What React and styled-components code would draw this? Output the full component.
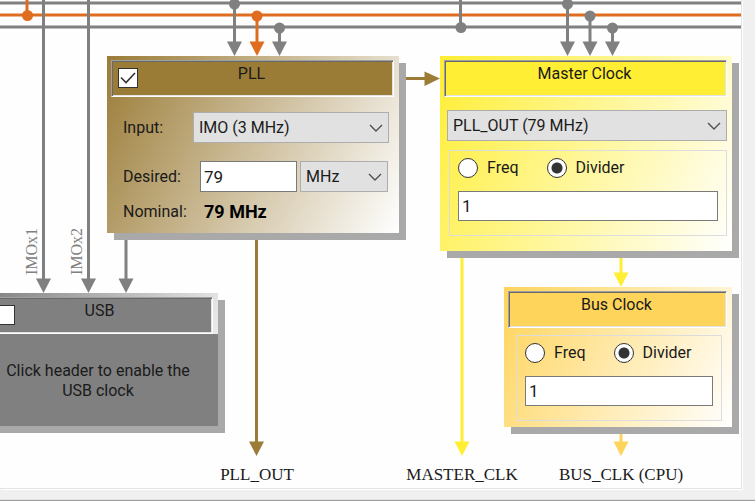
import React, { useState } from "react";
import styled, { createGlobalStyle, css } from "styled-components";

const GlobalStyle = createGlobalStyle`
  * { box-sizing: border-box; }
  body { margin: 0; background: #f0f0f0; }
`;

const GRAY = "#808080";
const ORANGE = "#df6d20";
const BROWN = "#9b7c37";
const YELLOW = "#ffee33";
const AMBER = "#ffd45a";

const ui = css`
  font-family: Roboto, "Liberation Sans", sans-serif;
  font-size: 16px;
  line-height: 20px;
  color: #1a1a1a;
`;

const Page = styled.div`
  ${ui}
  display: flex;
  flex-direction: column;
  gap: 10px;
  min-height: 100vh;
  overflow: hidden;
  background: #f0f0f0;
`;

const Canvas = styled.main`
  position: relative;
  flex: 1;
  min-height: 489px;
  margin-right: 13px;
  overflow: hidden;
  background: #fefefe;
  border: solid #e3e3e3;
  border-width: 0 1px 1px 0;
  box-shadow: 1px 1px 0 #fff;
`;

const StatusEdge = styled.footer`
  height: 2px;
  background: #a0a0a0;
  border-top: 1px solid #e3e3e3;
`;

const WireLayer = styled.svg`
  position: absolute;
  inset: 0;
  width: 100%;
  height: 100%;
`;

const Node = styled.section`
  position: absolute;
  left: ${(p) => p.$x}px;
  top: ${(p) => p.$y}px;
  width: ${(p) => p.$w}px;
  display: flex;
  flex-direction: column;
  background: linear-gradient(118deg, ${(p) => p.$color}, #fff);
  box-shadow: 7px 7px 0 #a9a9a9;
`;

const Header = styled.label`
  display: grid;
  grid-template-columns: 20px 1fr 22px;
  height: 37px;
  margin: 4px 5px 0 4px;
  padding: 1px 6px;
  background: ${(p) => p.$color};
  border: 1px solid;
  border-color: #a0a0a0 #fff #fff #a0a0a0;
  box-shadow: inset 1px 1px 0 #696969, inset -1px -1px 0 #e3e3e3;
`;

const Title = styled.span`
  grid-column: 2;
  padding-top: 2px;
  text-align: center;
`;

const CheckFrame = styled.span`
  display: grid;
  align-self: start;
  margin-top: 6px;
  > * { grid-area: 1 / 1; }
  svg { pointer-events: none; }
`;

const CheckInput = styled.input`
  appearance: none;
  width: 20px;
  height: 20px;
  margin: 0;
  background: #fff;
  border: 1px solid #333;
  &:not(:checked) + svg { visibility: hidden; }
`;

const SelectFrame = styled.span`
  display: grid;
  align-items: center;
  width: ${(p) => (p.$w ? `${p.$w}px` : "100%")};
  > * { grid-area: 1 / 1; }
  svg { justify-self: end; margin-right: 6px; pointer-events: none; }
`;

const SelectInput = styled.select`
  ${ui}
  appearance: none;
  width: 100%;
  height: 31px;
  margin: 0;
  padding: 0 24px 0 5px;
  background: #e1e1e1;
  border: 1px solid #adadad;
  border-radius: 0;
`;

const TextInput = styled.input`
  ${ui}
  font-size: 17px;
  width: ${(p) => (p.$w ? `${p.$w}px` : "100%")};
  height: ${(p) => p.$h || 30}px;
  margin: 0;
  padding: 0 3px;
  background: #fff;
  border: 1px solid #7a7a7a;
  border-radius: 0;
`;

const PllBody = styled.div`
  display: flex;
  flex-direction: column;
  padding: 15px 10px 9px 16px;
`;

const Row = styled.div`
  display: flex;
  align-items: center;
  gap: ${(p) => p.$gap || 0}px;
  min-height: 24px;
  margin-bottom: ${(p) => p.$after || 0}px;
`;

const FieldLabel = styled.label`
  flex: none;
  width: ${(p) => p.$w}px;
`;

const Nominal = styled.output`
  font-size: 18px;
  font-weight: 700;
  color: #000;
`;

const ClockBody = styled.div`
  display: flex;
  flex-direction: column;
  gap: 9px;
  padding: ${(p) => p.$pad};
`;

const Group = styled.fieldset`
  display: flex;
  flex-direction: column;
  gap: 13px;
  min-width: 0;
  height: 86px;
  margin: 0 0 0 2px;
  padding: 7px 8px;
  border: 1px solid #dcdcdc;
`;

const Radios = styled.div`
  display: flex;
  gap: 28px;
`;

const RadioLabel = styled.label`
  display: flex;
  align-items: center;
  gap: 9px;
`;

const RadioInput = styled.input`
  appearance: none;
  width: 20px;
  height: 20px;
  margin: 0;
  border: 1px solid #333;
  border-radius: 50%;
  background: #fff;
  &:checked { background: radial-gradient(circle, #333 5px, #fff 6px); }
`;

const Disabled = styled.div`
  margin: 0;
  padding: 27px 20px 25px 14px;
  background: ${GRAY};
  text-align: center;
`;

const Signal = styled.span`
  position: absolute;
  left: ${(p) => p.$x}px;
  top: 465px;
  font-family: "Liberation Serif", serif;
  font-size: 17px;
  white-space: nowrap;
  transform: translateX(-50%);
`;

const VerticalSignal = styled.span`
  position: absolute;
  left: ${(p) => p.$x}px;
  top: 226px;
  height: 49px;
  writing-mode: vertical-rl;
  rotate: 180deg;
  font-family: "Liberation Serif", serif;
  color: ${GRAY};
`;

const Wire = ({ x, from, to, color = GRAY, dot }) => (
  <g stroke={color} fill={color}>
    <line x1={x} y1={from} x2={x} y2={to - 12} strokeWidth="3" />
    <path d={`M${x - 7.5} ${to - 14.5}h15L${x} ${to}z`} stroke="none" />
    {dot && <circle cx={x} cy={from} r="5.5" stroke="none" />}
  </g>
);

const Wires = () => (
  <WireLayer aria-hidden="true">
    <line x1="0" y1="3" x2="100%" y2="3" stroke={GRAY} strokeWidth="3" />
    <line x1="0" y1="15" x2="100%" y2="15" stroke={ORANGE} strokeWidth="3" />
    <line x1="0" y1="27" x2="100%" y2="27" stroke={GRAY} strokeWidth="3" />
    <path d="M27 0V15" stroke={ORANGE} strokeWidth="3" />
    <circle cx="27.5" cy="15.5" r="5.5" fill={ORANGE} />
    <path d="M460.5 0V27" stroke={GRAY} strokeWidth="3" />
    <circle cx="461" cy="27.5" r="5.5" fill={GRAY} />
    <Wire x={43.5} from={0} to={293} />
    <Wire x={88.5} from={0} to={293} />
    <Wire x={126} from={239} to={293} />
    <Wire x={234.5} from={4} to={56} dot />
    <Wire x={257} from={16} to={56} color={ORANGE} dot />
    <Wire x={279.5} from={28} to={56} dot />
    <Wire x={567.5} from={4} to={56} dot />
    <Wire x={590} from={16} to={56} dot />
    <Wire x={612.5} from={28} to={56} dot />
    <Wire x={256.5} from={239} to={456} color={BROWN} />
    <Wire x={462} from={257} to={456} color={YELLOW} />
    <Wire x={621} from={257} to={287} color={YELLOW} />
    <Wire x={621} from={432} to={456} color={AMBER} />
    <path d="M406 78.5H426" stroke={BROWN} strokeWidth="3" />
    <path d="M424.500 71.500V86L440 78.500z" fill={BROWN} />
  </WireLayer>
);

const HeaderCheck = ({ checked }) => (
  <CheckFrame>
    <CheckInput type="checkbox" defaultChecked={checked} />
    <svg width="20" height="20" fill="none" stroke="#333" strokeWidth="1.6">
      <path d="M3 9.500L8 14.500L17 5" />
    </svg>
  </CheckFrame>
);

const Select = ({ id, label, width, options }) => (
  <SelectFrame $w={width}>
    <SelectInput id={id} aria-label={label}>
      {options.map((o) => <option key={o}>{o}</option>)}
    </SelectInput>
    <svg width="14" height="10" fill="none" stroke="#505050" strokeWidth="1.4">
      <path d="M1 2L7 8L13 2" />
    </svg>
  </SelectFrame>
);

const DividerGroup = ({ name }) => {
  const [mode, setMode] = useState("Divider");
  return (
    <Group aria-label={`${name} setting`}>
      <Radios>
        {["Freq", "Divider"].map((m) => (
          <RadioLabel key={m}>
            <RadioInput type="radio" name={name} checked={mode === m} onChange={() => setMode(m)} />
            {m}
          </RadioLabel>
        ))}
      </Radios>
      <TextInput defaultValue="1" aria-label={`${name} ${mode}`} />
    </Group>
  );
};

export default function App() {
  return (
    <Page>
      <GlobalStyle />
      <Canvas>
        <Wires />
        <VerticalSignal $x={22}>IMOx1</VerticalSignal>
        <VerticalSignal $x={67}>IMOx2</VerticalSignal>

        <Node $x={107} $y={56} $w={292} $color={BROWN}>
          <Header $color={BROWN}>
            <HeaderCheck checked />
            <Title>PLL</Title>
          </Header>
          <PllBody>
            <Row $after={18}>
              <FieldLabel $w={70} htmlFor="pll-input">Input:</FieldLabel>
              <Select id="pll-input" options={["IMO (3 MHz)"]} />
            </Row>
            <Row $gap={3} $after={8}>
              <FieldLabel $w={74} htmlFor="pll-desired">Desired:</FieldLabel>
              <TextInput id="pll-desired" $w={97} $h={31} defaultValue="79" />
              <Select label="Desired unit" width={88} options={["MHz"]} />
            </Row>
            <Row>
              <FieldLabel $w={81} htmlFor="pll-nominal">Nominal:</FieldLabel>
              <Nominal id="pll-nominal">79 MHz</Nominal>
            </Row>
          </PllBody>
        </Node>

        <Node $x={440} $y={56} $w={292} $color={YELLOW}>
          <Header as="header" $color={YELLOW}>
            <Title>Master Clock</Title>
          </Header>
          <ClockBody $pad="13px 5px 15px 7px">
            <Select label="Master Clock source" options={["PLL_OUT (79 MHz)"]} />
            <DividerGroup name="Master Clock" />
          </ClockBody>
        </Node>

        <Node $x={504} $y={287} $w={228} $color={AMBER}>
          <Header as="header" $color={AMBER}>
            <Title>Bus Clock</Title>
          </Header>
          <ClockBody $pad="7px 10px 6px">
            <DividerGroup name="Bus Clock" />
          </ClockBody>
        </Node>

        <Node $x={-16} $y={293} $w={234} $color={GRAY}>
          <Header $color={GRAY}>
            <HeaderCheck />
            <Title>USB</Title>
          </Header>
          <Disabled>Click header to enable the USB clock</Disabled>
        </Node>

        <Signal $x={257}>PLL_OUT</Signal>
        <Signal $x={462}>MASTER_CLK</Signal>
        <Signal $x={621}>BUS_CLK (CPU)</Signal>
      </Canvas>
      <StatusEdge />
    </Page>
  );
}
